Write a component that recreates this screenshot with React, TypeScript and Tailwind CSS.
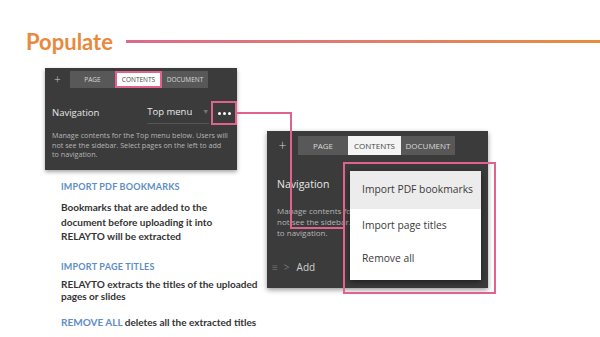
import React from "react";

const ui = { fontFamily: '"Open Sans", "Liberation Sans", sans-serif' };
const lato = { fontFamily: 'Lato, "Liberation Sans", sans-serif' };

function LeftPanel() {
  return (
    <div className="w-[192px] h-[102px] bg-[#3b3b3b] shadow-[0_2px_4px_rgba(0,0,0,0.35)] flex flex-col" style={ui}>
      <div className="flex items-center pt-[3px] h-[20px]">
        <div className="w-[25px] text-center text-[12px] leading-none text-[#cfcfcf] font-light">+</div>
        <div className="flex h-[17px]">
          <div className="w-[45px] bg-[#585858] text-[#d8d8d8] text-[6.5px] flex items-center justify-center">PAGE</div>
          <div className="w-[47px] bg-white text-[#444] text-[6.5px] flex items-center justify-center border-2 border-[#e0638b]">CONTENTS</div>
          <div className="w-[46px] bg-[#585858] text-[#d8d8d8] text-[6.5px] flex items-center justify-center">DOCUMENT</div>
        </div>
      </div>
      <div className="flex items-center h-[24px] mt-[13px] pl-[7px]">
        <div className="w-[96px] text-[9.5px] text-[#e8e8e8] whitespace-nowrap">Navigation</div>
        <div className="w-[62px] h-[22px] flex items-center border-b border-[#555] whitespace-nowrap">
          <span className="text-[9.5px] text-[#e8e8e8]">Top menu</span>
          <span className="ml-[10px] text-[7px] text-[#777]">▼</span>
        </div>
        <div className="ml-[2px] w-[26px] h-[24px] border-2 border-[#e0638b] flex items-center justify-center gap-[2px]">
          <span className="w-[3px] h-[3px] rounded-full bg-white" />
          <span className="w-[3px] h-[3px] rounded-full bg-white" />
          <span className="w-[3px] h-[3px] rounded-full bg-white" />
        </div>
      </div>
      <div className="pl-[7px] pt-[6px] text-[7.2px] leading-[9.5px] text-[#b5b5b5] whitespace-nowrap">
        <div>Manage contents for the Top menu below. Users will</div>
        <div>not see the sidebar. Select pages on the left to add</div>
        <div>to navigation.</div>
      </div>
    </div>
  );
}

function RightPanel() {
  return (
    <div className="relative w-[221px] h-[157px] bg-[#3b3b3b] shadow-[0_2px_5px_rgba(0,0,0,0.4)] flex flex-col" style={ui}>
      <div className="flex items-center pt-[5px] h-[24px]">
        <div className="w-[31px] text-center text-[14px] leading-none text-[#cfcfcf] font-light">+</div>
        <div className="flex h-[19px]">
          <div className="w-[50px] bg-[#585858] text-[#d8d8d8] text-[8px] flex items-center justify-center">PAGE</div>
          <div className="w-[53px] bg-[#f4f4f4] text-[#444] text-[8px] flex items-center justify-center">CONTENTS</div>
          <div className="w-[54px] bg-[#585858] text-[#d8d8d8] text-[8px] flex items-center justify-center">DOCUMENT</div>
        </div>
      </div>
      <div className="pl-[10px] mt-[22px] text-[10.5px] leading-[14px] text-[#e8e8e8]">Navigation</div>
      <div className="ml-[10px] w-[73px] mt-[14px] text-[8px] leading-[11px] text-[#b5b5b5] whitespace-nowrap overflow-hidden">
        <div>Manage contents for the Top menu below.</div>
        <div>not see the sidebar. Select pages on the</div>
        <div>to navigation.</div>
      </div>
      <div className="flex items-center pl-[5px] mt-[22px] text-[10px] text-[#d0d0d0]">
        <span className="text-[#6a6a6a] text-[10px]">≡</span>
        <span className="ml-[6px] text-[#7a7a7a] text-[10px]">&gt;</span>
        <span className="ml-[7px]">Add</span>
      </div>
      <div className="absolute left-[83px] top-[40px] w-[131px] h-[109px] bg-white shadow-[0_2px_6px_rgba(0,0,0,0.5)] flex flex-col text-[10.3px] text-[#3a3a3a] whitespace-nowrap">
        <div className="h-[38px] bg-[#ececec] flex items-center pl-[12px]">Import PDF bookmarks</div>
        <div className="h-[33px] flex items-center pl-[12px]">Import page titles</div>
        <div className="h-[33px] flex items-center pl-[12px]">Remove all</div>
      </div>
    </div>
  );
}

export default function App() {
  return (
    <div className="relative w-[600px] h-[337px] bg-white overflow-hidden">
      <div className="flex items-center pl-[26px] pt-[27px] h-[56px]" style={lato}>
        <div className="text-[22px] leading-none font-bold text-[#e8893d]">Populate</div>
        <div className="ml-[13px] flex-1 h-[2.5px] bg-gradient-to-r from-[#dc6a8c] to-[#e98c3a]" />
      </div>
      <div className="flex pl-[45px] mt-[12px]">
        <div className="w-[192px] flex flex-col">
          <LeftPanel />
          <div className="pl-[16px] pt-[11px] text-[#333]" style={lato}>
            <div className="text-[9px] font-bold text-[#5c8ec6] tracking-[0.2px] leading-[12px]">IMPORT PDF BOOKMARKS</div>
            <div className="mt-[7px] text-[10px] font-bold leading-[14.5px] whitespace-nowrap">
              <div>Bookmarks that are added to the</div>
              <div>document before uploading it into</div>
              <div>RELAYTO will be extracted</div>
            </div>
            <div className="mt-[17px] text-[9px] font-bold text-[#5c8ec6] tracking-[0.2px] leading-[12px]">IMPORT PAGE TITLES</div>
            <div className="mt-[5px] text-[10px] font-bold leading-[12px] whitespace-nowrap">
              <div>RELAYTO extracts the titles of the uploaded</div>
              <div>pages or slides</div>
            </div>
            <div className="mt-[14px] text-[10px] font-bold leading-[12px] whitespace-nowrap">
              <span className="text-[#5c8ec6]">REMOVE ALL</span> deletes all the extracted titles
            </div>
          </div>
        </div>
        <div className="ml-[30px] mt-[63px]">
          <RightPanel />
        </div>
      </div>
      <svg className="absolute left-0 top-0 pointer-events-none" width="600" height="337">
        <polyline points="237,113 291,113 291,228 343,228" fill="none" stroke="#e0638b" strokeWidth="2" />
        <rect x="344" y="163" width="151" height="130" fill="none" stroke="#e0638b" strokeWidth="2" />
      </svg>
    </div>
  );
}
